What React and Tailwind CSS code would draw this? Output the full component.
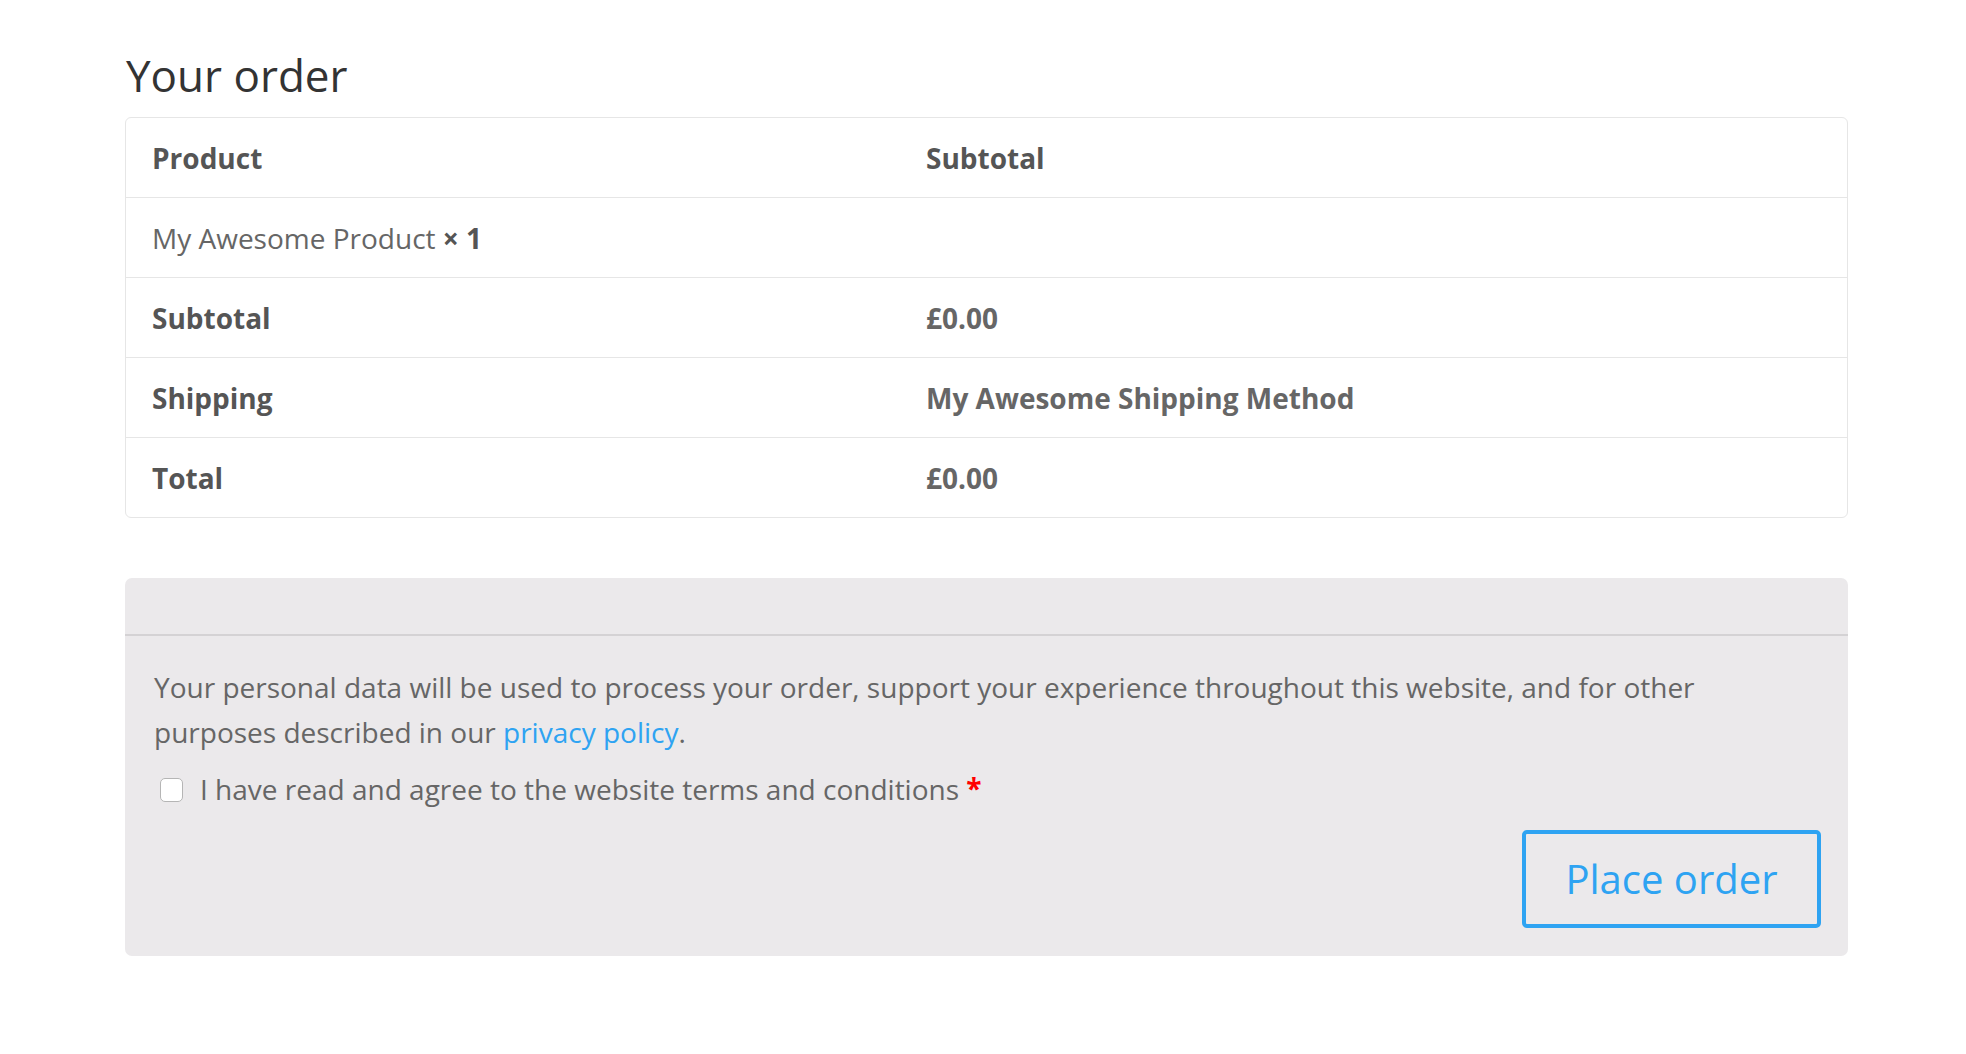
export default function App() {
  const rows = [
    { label: 'Subtotal', value: '£0.00' },
    { label: 'Shipping', value: 'My Awesome Shipping Method' },
    { label: 'Total', value: '£0.00' },
  ];

  return (
    <div
      className="min-h-screen bg-white pl-[125px] pr-[118px] pt-[53px] pb-[90px]"
      style={{ fontFamily: '"Open Sans", "Liberation Sans", sans-serif' }}
    >
      {/* Heading */}
      <h3 className="text-[44px] leading-[45px] font-normal text-[#333333] pl-px mb-[19px]">Your order</h3>

      {/* Order review table */}
      <div className="border border-[#e6e6e6] rounded-[6px] text-[28px]">
        <div className="flex h-[79px] items-center font-bold text-[#555555]">
          <div className="w-[774px] pl-[26px]">Product</div>
          <div className="flex-1 pl-[26px]">Subtotal</div>
        </div>
        <div className="flex h-[80px] items-center border-t border-[#e6e6e6] text-[#666666]">
          <div className="w-[774px] pl-[26px]">
            My Awesome Product <strong className="font-bold text-[#555555]">× 1</strong>
          </div>
          <div className="flex-1 pl-[26px]"></div>
        </div>
        {rows.map((r) => (
          <div key={r.label} className="flex h-[80px] items-center border-t border-[#e6e6e6] font-bold">
            <div className="w-[774px] pl-[26px] text-[#555555]">{r.label}</div>
            <div className="flex-1 pl-[26px] text-[#666666]">{r.value}</div>
          </div>
        ))}
      </div>

      {/* Payment box */}
      <div className="mt-[60px] bg-[#ebe9eb] rounded-[7px]">
        <div className="h-[58px] border-b-2 border-[#d4d2d4]"></div>
        <div className="pl-[29px] pr-[27px] pt-[29px] pb-[28px] text-[28px] leading-[45px] text-[#666666]">
          <p>
            Your personal data will be used to process your order, support your experience throughout this website, and for other
            <br />
            purposes described in our <span className="text-[#2ea3f2]">privacy policy</span>.
          </p>
          <label className="mt-[12px] flex items-center">
            <span className="ml-[6px] mr-[17px] w-[23px] h-[24px] rounded-[5px] border border-[#b5b5b5] bg-white shrink-0"></span>
            <span>
              I have read and agree to the website terms and conditions{' '}
              <abbr className="no-underline font-bold text-[#ff0000] relative -top-[1px]">*</abbr>
            </span>
          </label>
          <div className="mt-[18px] flex justify-end">
            <button className="w-[299px] h-[98px] border-4 border-[#2ea3f2] rounded-[5px] text-[40px] leading-none text-[#2ea3f2]">
              Place order
            </button>
          </div>
        </div>
      </div>
    </div>
  );
}
